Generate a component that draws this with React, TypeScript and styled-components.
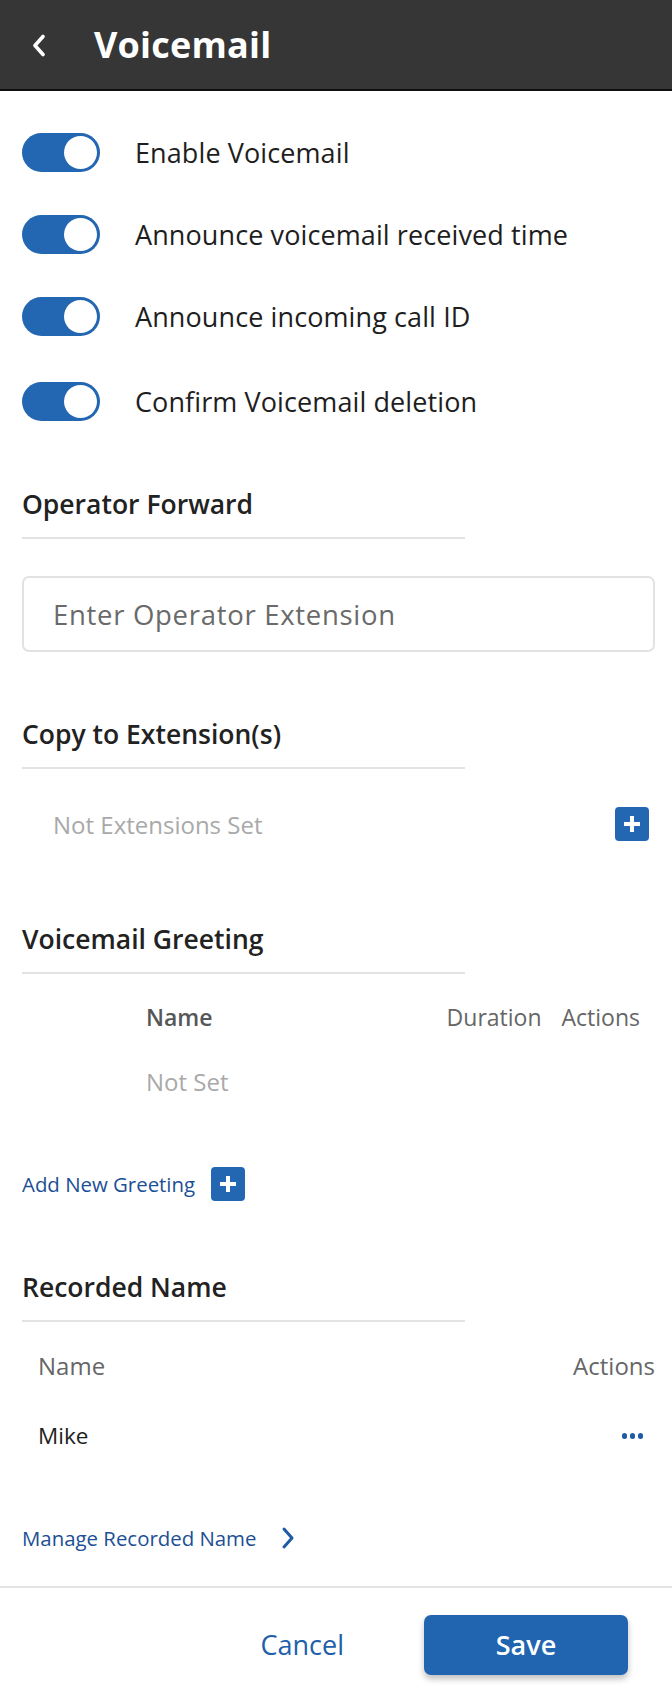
import React from "react";
import styled, { createGlobalStyle } from "styled-components";

const Global = createGlobalStyle`
  html, body { margin: 0; padding: 0; background: #fff; }
  body { font-family: "Open Sans", "Noto Sans", sans-serif; color: #1c1c1c; }
  * { box-sizing: border-box; }
`;

const Page = styled.div`
  width: 672px;
  min-height: 1690px;
  display: flex;
  flex-direction: column;
  background: #fff;
`;

const Header = styled.header`
  height: 91px;
  background: #363636;
  border-bottom: 2px solid #0e0e0e;
  display: flex;
  align-items: center;
  padding-left: 31px;
  gap: 48px;
`;

const BackBtn = styled.button`
  border: none;
  background: none;
  padding: 0;
  width: 15px;
  height: 24px;
  display: flex;
  align-items: center;
  justify-content: center;
  margin-top: 2px;
`;

const Title = styled.h1`
  margin: 0;
  color: #fff;
  font-size: 36px;
  font-weight: 700;
  letter-spacing: 0.2px;
`;

const Content = styled.main`
  padding: 42px 17px 0 22px;
  display: flex;
  flex-direction: column;
  flex: 1;
`;

const ToggleList = styled.div`
  display: flex;
  flex-direction: column;
  gap: 43px;
`;

const ToggleRow = styled.label`
  display: flex;
  align-items: center;
  gap: 35px;
  height: 39px;
  &:last-child { margin-top: 3px; }
`;

const Track = styled.span<{ $on: boolean }>`
  position: relative;
  width: 78px;
  height: 39px;
  border-radius: 20px;
  background: ${(p) => (p.$on ? "#2366b1" : "#c7c7c7")};
  flex-shrink: 0;
`;

const Knob = styled.span<{ $on: boolean }>`
  position: absolute;
  top: 3px;
  ${(p) => (p.$on ? "right: 3px;" : "left: 3px;")}
  width: 33px;
  height: 33px;
  border-radius: 50%;
  background: #fff;
`;

const ToggleLabel = styled.span`
  font-size: 27px;
  color: #1e1e1e;
  letter-spacing: 0.1px;
`;

const Section = styled.section<{ $top: number }>`
  margin-top: ${(p) => p.$top}px;
  display: flex;
  flex-direction: column;
`;

const SectionTitle = styled.h2`
  margin: 0;
  font-size: 26.5px;
  line-height: 34px;
  font-weight: 600;
  color: #222;
`;

const Divider = styled.hr<{ $top?: number }>`
  margin: ${(p) => p.$top ?? 16}px 0 0 0;
  width: 443px;
  border: none;
  height: 2px;
  background: #e3e3e3;
`;

const TextInput = styled.input`
  margin-top: 37px;
  height: 76px;
  width: 100%;
  border: 2px solid #e2e2e2;
  border-radius: 7px;
  padding: 0 29px;
  font-family: "Open Sans", sans-serif;
  font-size: 27.5px;
  letter-spacing: 0.7px;
  color: #333;
  outline: none;
  &::placeholder { color: #6a6a6a; }
`;

const EmptyRow = styled.div<{ $top: number }>`
  margin-top: ${(p) => p.$top}px;
  display: flex;
  align-items: center;
  justify-content: space-between;
  padding-left: 31px;
  padding-right: 6px;
  height: 36px;
`;

const Muted = styled.span<{ $size?: number }>`
  font-size: ${(p) => p.$size ?? 24}px;
  color: #a9a9a9;
`;

const PlusBox = styled.button`
  width: 34px;
  height: 34px;
  border-radius: 4px;
  border: none;
  padding: 0;
  background: #2366b1;
  display: flex;
  align-items: center;
  justify-content: center;
  flex-shrink: 0;
`;

const GreetingGrid = styled.div`
  margin-top: 27px;
  display: grid;
  grid-template-columns: 104px 1fr auto auto;
  column-gap: 20px;
  row-gap: 32px;
  padding-right: 15px;
  align-items: center;
`;

const HeadCell = styled.span<{ $strong?: boolean }>`
  font-size: 23px;
  line-height: 32px;
  color: ${(p) => (p.$strong ? "#575757" : "#666")};
  font-weight: ${(p) => (p.$strong ? 600 : 400)};
`;

const LinkRow = styled.div<{ $top: number; $gap: number }>`
  margin-top: ${(p) => p.$top}px;
  display: flex;
  align-items: center;
  gap: ${(p) => p.$gap}px;
`;

const LinkText = styled.a`
  font-size: 20.4px;
  color: #1c4f95;
  text-decoration: none;
  line-height: 28px;
`;

const NameTable = styled.div`
  margin-top: 28px;
  display: grid;
  grid-template-columns: 1fr auto;
  row-gap: 38px;
  padding-left: 16px;
  align-items: center;
`;

const NameCell = styled.span<{ $head?: boolean }>`
  font-size: ${(p) => (p.$head ? 24 : 22.5)}px;
  line-height: 32px;
  color: ${(p) => (p.$head ? "#666" : "#1e1e1e")};
`;

const DotsBtn = styled.button`
  justify-self: end;
  margin-right: 12px;
  border: none;
  background: none;
  padding: 0;
  display: flex;
  gap: 2.5px;
`;

const Dot = styled.span`
  width: 5.5px;
  height: 5.5px;
  border-radius: 50%;
  background: #1f5aa6;
`;

const Footer = styled.footer`
  margin-top: 32px;
  border-top: 2px solid #e4e4e4;
  height: 104px;
  display: flex;
  align-items: center;
  justify-content: flex-end;
  padding: 11px 44px 0 0;
  gap: 80px;
`;

const CancelBtn = styled.button`
  border: none;
  background: none;
  font-family: "Open Sans", sans-serif;
  font-size: 27px;
  color: #2160a9;
  padding: 0;
`;

const SaveBtn = styled.button`
  width: 204px;
  height: 60px;
  border: none;
  border-radius: 7px;
  background: #2164b0;
  color: #fff;
  font-family: "Open Sans", sans-serif;
  font-size: 27px;
  font-weight: 600;
  box-shadow: 0 4px 6px rgba(0, 0, 0, 0.25);
`;

const Plus = () => (
  <svg width="20" height="20" viewBox="0 0 20 20">
    <path d="M10 2v16M2 10h16" stroke="#fff" strokeWidth="4" />
  </svg>
);

const toggles = [
  "Enable Voicemail",
  "Announce voicemail received time",
  "Announce incoming call ID",
  "Confirm Voicemail deletion",
];

export default function App() {
  return (
    <Page>
      <Global />
      <Header>
        <BackBtn aria-label="Back">
          <svg width="15" height="23" viewBox="0 0 15 23">
            <path d="M12 2.5 L4 11.5 L12 20.5" fill="none" stroke="#fff" strokeWidth="3.6" strokeLinecap="round" strokeLinejoin="round" />
          </svg>
        </BackBtn>
        <Title>Voicemail</Title>
      </Header>
      <Content>
        <ToggleList>
          {toggles.map((t) => (
            <ToggleRow key={t}>
              <Track $on>
                <Knob $on />
              </Track>
              <ToggleLabel>{t}</ToggleLabel>
            </ToggleRow>
          ))}
        </ToggleList>

        <Section $top={66}>
          <SectionTitle>Operator Forward</SectionTitle>
          <Divider />
          <TextInput placeholder="Enter Operator Extension" />
        </Section>

        <Section $top={65}>
          <SectionTitle>Copy to Extension(s)</SectionTitle>
          <Divider />
          <EmptyRow $top={37}>
            <Muted>Not Extensions Set</Muted>
            <PlusBox aria-label="Add extension">
              <Plus />
            </PlusBox>
          </EmptyRow>
        </Section>

        <Section $top={80}>
          <SectionTitle>Voicemail Greeting</SectionTitle>
          <Divider />
          <GreetingGrid>
            <span />
            <HeadCell $strong>Name</HeadCell>
            <HeadCell>Duration</HeadCell>
            <HeadCell>Actions</HeadCell>
            <span />
            <Muted $size={24}>Not Set</Muted>
            <span />
            <span />
          </GreetingGrid>
          <LinkRow $top={69} $gap={16}>
            <LinkText href="#">Add New Greeting</LinkText>
            <PlusBox aria-label="Add greeting">
              <Plus />
            </PlusBox>
          </LinkRow>
        </Section>

        <Section $top={69}>
          <SectionTitle>Recorded Name</SectionTitle>
          <Divider />
          <NameTable>
            <NameCell $head>Name</NameCell>
            <NameCell $head>Actions</NameCell>
            <NameCell>Mike</NameCell>
            <DotsBtn aria-label="More actions">
              <Dot />
              <Dot />
              <Dot />
            </DotsBtn>
          </NameTable>
          <LinkRow $top={72} $gap={24}>
            <LinkText href="#">Manage Recorded Name</LinkText>
            <svg width="16" height="24" viewBox="0 0 16 24">
              <path d="M4 3 L12 12 L4 21" fill="none" stroke="#1f5aa6" strokeWidth="3" strokeLinecap="round" strokeLinejoin="round" />
            </svg>
          </LinkRow>
        </Section>
      </Content>
      <Footer>
        <CancelBtn>Cancel</CancelBtn>
        <SaveBtn>Save</SaveBtn>
      </Footer>
    </Page>
  );
}
